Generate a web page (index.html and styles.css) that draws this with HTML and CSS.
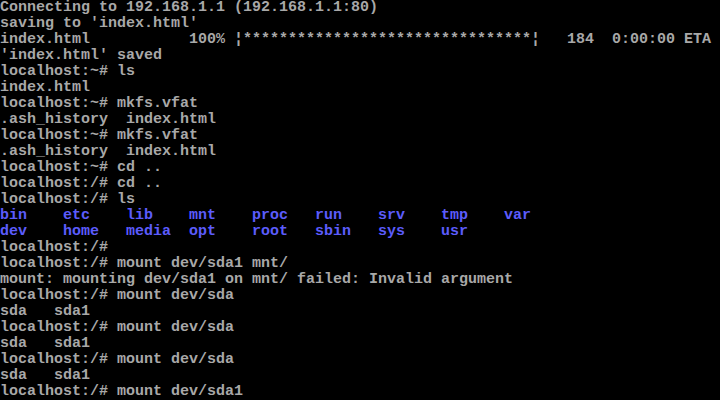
FILE: index.html
```html
<!DOCTYPE html>
<html lang="en">
<head>
    <meta charset="UTF-8">
    <meta name="viewport" content="width=device-width, initial-scale=1.0">
    <title>tty1</title>
    <link rel="stylesheet" href="styles.css">
</head>
<body>
<div class="console">
    <div class="line">Connecting to 192.168.1.1 (192.168.1.1:80)</div>
    <div class="line">saving to 'index.html'</div>
    <div class="line">index.html           100% ¦********************************¦   184  0:00:00 ETA</div>
    <div class="line">'index.html' saved</div>
    <div class="line">localhost:~# ls</div>
    <div class="line">index.html</div>
    <div class="line">localhost:~# mkfs.vfat</div>
    <div class="line">.ash_history  index.html</div>
    <div class="line">localhost:~# mkfs.vfat</div>
    <div class="line">.ash_history  index.html</div>
    <div class="line">localhost:~# cd ..</div>
    <div class="line">localhost:/# cd ..</div>
    <div class="line">localhost:/# ls</div>
    <div class="line dir">bin    etc    lib    mnt    proc   run    srv    tmp    var</div>
    <div class="line dir">dev    home   media  opt    root   sbin   sys    usr</div>
    <div class="line">localhost:/#</div>
    <div class="line">localhost:/# mount dev/sda1 mnt/</div>
    <div class="line">mount: mounting dev/sda1 on mnt/ failed: Invalid argument</div>
    <div class="line">localhost:/# mount dev/sda</div>
    <div class="line">sda   sda1</div>
    <div class="line">localhost:/# mount dev/sda</div>
    <div class="line">sda   sda1</div>
    <div class="line">localhost:/# mount dev/sda</div>
    <div class="line">sda   sda1</div>
    <div class="line">localhost:/# mount dev/sda1</div>
</div>
</body>
</html>
```

FILE: styles.css
```css
html, body {
    margin: 0;
    padding: 0;
    background-color: #000000;
}
.console {
    width: 720px;
    height: 400px;
    overflow: hidden;
    background-color: #000000;
    color: #a8a8a8;
    font-family: "Liberation Mono", "DejaVu Sans Mono", monospace;
    font-size: 15px;
    font-weight: bold;
    line-height: 16px;
}
.line {
    height: 16px;
    white-space: pre;
}
.dir {
    color: #5c5cfc;
}
```
